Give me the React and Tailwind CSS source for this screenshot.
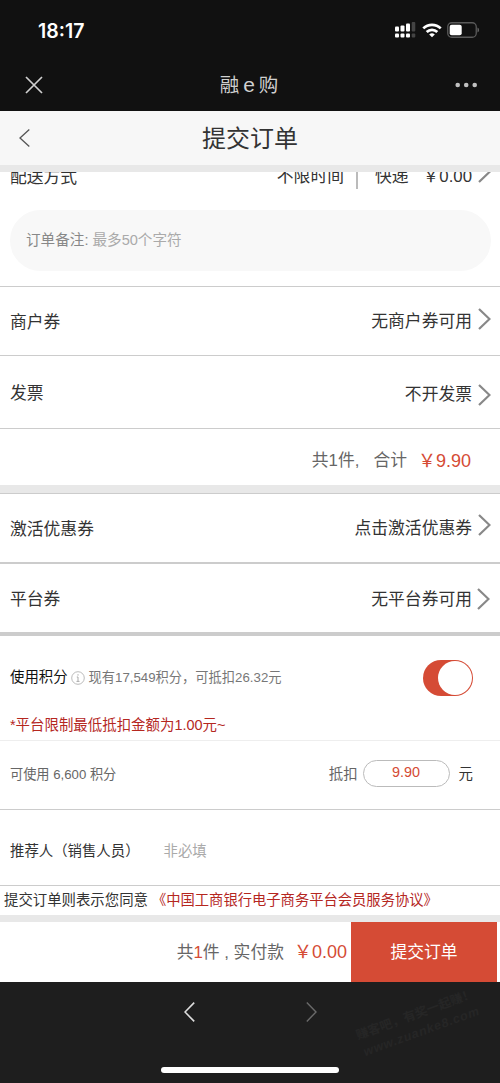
import { clsx } from 'clsx';

function Chevron({ className }) {
    return (
        <svg className={clsx('block h-[22px] w-[13px] shrink-0', className)} viewBox="0 0 13 22" fill="none" stroke="#888" strokeWidth="2.2">
            <path d="M1 1l10.5 10L1 21" />
        </svg>
    );
}

function StatusBar() {
    return (
        <div className="flex h-[60px] items-center pl-[38px] pr-[20px] text-white">
            <span className="mt-[2px] font-['Inter','Liberation_Sans',sans-serif] text-[19.5px] font-semibold leading-[20px]">18:17</span>
            <svg className="ml-auto h-4 w-[21px]" viewBox="0 0 21 16" fill="#fff">
                <rect x="0" y="4.5" width="4" height="5" rx="1" />
                <rect x="5.5" y="3.5" width="4" height="6" rx="1" />
                <rect x="11" y="1.5" width="4" height="8" rx="1" />
                <rect x="0" y="11.5" width="4" height="4" rx="1" />
                <rect x="5.5" y="11.5" width="4" height="4" rx="1" />
                <rect x="11" y="11.5" width="4" height="4" rx="1" />
                <rect x="16.7" y="0" width="3.6" height="9.5" rx="1" fill="#444" />
                <rect x="16.7" y="11.5" width="3.6" height="4" rx="1" fill="#444" />
            </svg>
            <svg className="ml-[6px] h-[15px] w-5" viewBox="0 0 20 15" fill="none" stroke="#fff" strokeWidth="2.7">
                <path d="M1.3 5.4a12.3 12.3 0 0 1 17.4 0" />
                <path d="M4.7 9a7.5 7.5 0 0 1 10.6 0" />
                <path d="M10 14.3l-2.8-2.8a4 4 0 0 1 5.6 0z" fill="#fff" stroke="none" />
            </svg>
            <svg className="ml-[5px] h-4 w-[33px]" viewBox="0 0 33 16">
                <rect x="0.75" y="0.75" width="28.5" height="14.5" rx="4" fill="none" stroke="#5a5a5a" strokeWidth="1.3" />
                <rect x="2.7" y="2.7" width="12" height="10.6" rx="2" fill="#fff" />
                <path d="M30.5 5.5q1.6.8 1.6 2.5t-1.6 2.5z" fill="#666" />
            </svg>
        </div>
    );
}

function NavBar() {
    return (
        <div className="-mt-px flex h-[51px] items-center justify-between pl-[25px] pr-[22px]">
            <svg className="h-[18px] w-[18px]" viewBox="0 0 18 18" stroke="#d0d0d0" strokeWidth="1.7">
                <path d="M1 1l16 16M17 1L1 17" />
            </svg>
            <span className="text-[19.5px] leading-[20px] text-[#d0d0d0]">
                融<span className="mx-[4px] text-[21px]">e</span>购
            </span>
            <svg className="h-[6px] w-[23px]" viewBox="0 0 23 6" fill="#c0c0c0">
                <circle cx="2.7" cy="3" r="2.3" />
                <circle cx="11.2" cy="3" r="2.3" />
                <circle cx="19.7" cy="3" r="2.3" />
            </svg>
        </div>
    );
}

function Row({ label, value, className, labelClass, valueClass, chevronClass }) {
    return (
        <div className={clsx('flex items-center justify-between pl-[10px] pr-[9px] text-[16.8px] leading-[24px] text-[#333]', className)}>
            <span className={labelClass}>{label}</span>
            <span className="flex items-center">
                <span className={valueClass}>{value}</span>
                <Chevron className={chevronClass} />
            </span>
        </div>
    );
}

function Toggle() {
    return (
        <div className="flex h-[36px] w-[50px] items-center justify-end rounded-full bg-[#d54b35] pr-px">
            <div className="h-[34px] w-[34px] rounded-full bg-white" />
        </div>
    );
}

export default function App() {
    return (
        <div className="flex h-[1083px] w-[500px] flex-col overflow-hidden whitespace-nowrap bg-white font-['Liberation_Sans','Noto_Sans_CJK_SC',sans-serif] text-[#333]">
            <header className="h-[111px] shrink-0 bg-[#111]">
                <StatusBar />
                <NavBar />
            </header>

            <div className="flex h-[54px] shrink-0 items-center bg-[#f7f7f7] pl-[19px]">
                <svg className="h-[18px] w-[11px]" viewBox="0 0 11 18" fill="none" stroke="#555" strokeWidth="1.3">
                    <path d="M10.3.6L1 9l9.3 8.4" />
                </svg>
                <h1 className="mr-[30px] mt-[2px] flex-1 text-center text-[24px] leading-[30px]">提交订单</h1>
            </div>

            <main className="h-[750px] shrink-0 border-t-[7px] border-[#e8e8e8]">
                {/* scrolled partly under the title bar */}
                <div className="h-[114px] overflow-hidden px-[9px]">
                    <div className="-mt-[7px] flex h-[24px] items-center text-[16.8px] leading-[24px]">
                        <span className="ml-px mt-[2px]">配送方式</span>
                        <span className="ml-auto mr-px">不限时间</span>
                        <span className="ml-[11px] mt-[2px] h-[22px] w-[2px] bg-[#bbb]" />
                        <span className="ml-[17px]">快递</span>
                        <span className="ml-[14px] mr-[6px]">￥0.00</span>
                        <Chevron className="-mt-[10px]" />
                    </div>
                    <div className="ml-px mt-[21px] flex h-[61px] items-center rounded-full bg-[#f8f8f8] pl-[16px] pt-px text-[14.6px] text-[#888]">
                        订单备注:
                        <span className="ml-[4px] text-[#aaa]">最多50个字符</span>
                    </div>
                </div>

                <Row label="商户券" value="无商户券可用" className="h-[70px] border-y border-[#ccc]" labelClass="mt-[4px]" valueClass="mr-[6px] mt-[2px]" chevronClass="-mt-[5px]" />
                <Row label="发票" value="不开发票" className="h-[73px] border-b border-[#ccc]" labelClass="mt-[4px]" valueClass="mr-[6px] mt-[6px]" chevronClass="mt-[5px]" />

                <div className="flex h-[56px] items-center justify-end pr-[29px] pt-[8px] text-[16.8px] text-[#666]">
                    共1件,<span className="ml-[14px]">合计</span>
                    <span className="ml-[11px] text-[18px] text-[#d54b35]">￥9.90</span>
                </div>

                <div className="h-[9px] border-b border-[#ccc] bg-[#e8e8e8]" />
                <Row label="激活优惠券" value="点击激活优惠券" className="h-[70px] border-b-2 border-[#ccc]" labelClass="mt-[3px]" valueClass="mr-[6px] mt-[2px]" chevronClass="-mt-[6px]" />
                <Row label="平台券" value="无平台券可用" className="h-[72px] border-b-[4px] border-[#ccc]" labelClass="mt-[3px]" valueClass="mr-[5px] mt-[3px]" chevronClass="mr-px mt-[1px]" />

                <div className="h-[105px] border-b border-[#eee] pl-[10px] pr-[27px] pt-[24px]">
                    <div className="flex h-[36px] items-center">
                        <span className="text-[14.4px] text-[#111]">使用积分</span>
                        <svg className="ml-[3px] h-[14px] w-[14px]" viewBox="0 0 14 14" fill="none" stroke="#aaa">
                            <circle cx="7" cy="7" r="6.3" strokeWidth="0.8" />
                            <path d="M7 3.2v1.4M5.8 6H7v4.3M5.5 10.4h3" />
                        </svg>
                        <span className="ml-[4px] mr-auto text-[13.25px] text-[#777]">现有17,549积分，可抵扣26.32元</span>
                        <Toggle />
                    </div>
                    <p className="mt-[18px] text-[14.45px] leading-[22px] text-[#b5271f]">*平台限制最低抵扣金额为1.00元~</p>
                </div>

                <div className="flex h-[69px] items-center border-b border-[#ccc] pl-[10px] pr-[27px] text-[14.4px]">
                    <span className="mr-auto text-[13.2px] text-[#666]">可使用 6,600 积分</span>
                    <span className="text-[#666]">抵扣</span>
                    <span className="mx-[5px] mb-[4px] flex h-[27px] w-[87px] items-center justify-center rounded-full border border-[#bbb] text-[#d54b35]">9.90</span>
                    <span className="ml-[4px]">元</span>
                </div>

                <div className="flex h-[76px] items-center border-b border-[#ccc] pl-[10px] pt-[9px] text-[14.4px]">
                    推荐人（销售人员）
                    <span className="ml-[24px] text-[#aaa]">非必填</span>
                </div>

                <p className="h-[29px] pl-[4px] text-[14.4px] leading-[29px]">
                    提交订单则表示您同意<span className="ml-[4px] text-[14.3px] text-[#b5271f]">《中国工商银行电子商务平台会员服务协议》</span>
                </p>
            </main>

            <div className="flex h-[67px] shrink-0 items-center justify-end border-t-[7px] border-[#e8e8e8] pr-[3px] text-[16.8px] text-[#666]">
                <span className="mt-px">
                    共<span className="text-[#d54b35]">1</span>件 , 实付款
                </span>
                <span className="ml-[10px] mr-[4px] text-[18px] text-[#d54b35]">￥0.00</span>
                <button className="h-full w-[146px] bg-[#d54b35] pt-px text-white">提交订单</button>
            </div>

            <footer className="relative flex-1 bg-[#1e1e1e]">
                <div className="flex h-[60px] items-center justify-center gap-[111px]">
                    <svg className="h-5 w-[11px]" viewBox="0 0 11 20" fill="none" stroke="#ddd" strokeWidth="1.6">
                        <path d="M10.2.6L1 10l9.2 9.4" />
                    </svg>
                    <svg className="h-5 w-[11px]" viewBox="0 0 11 20" fill="none" stroke="#6a6a6a" strokeWidth="1.4">
                        <path d="M.8.6L10 10 .8 19.4" />
                    </svg>
                </div>
                <div className="mx-auto mt-[25px] h-[6px] w-[178px] rounded-full bg-white" />
                <div className="absolute left-[356px] top-[23px] -rotate-[20deg] text-center text-[12.5px] font-bold leading-[18px] text-[#262626]">
                    <div>赚客吧，有奖一起赚！</div>
                    <div className="italic tracking-[0.8px]">www.zuanke8.com</div>
                </div>
            </footer>
        </div>
    );
}
